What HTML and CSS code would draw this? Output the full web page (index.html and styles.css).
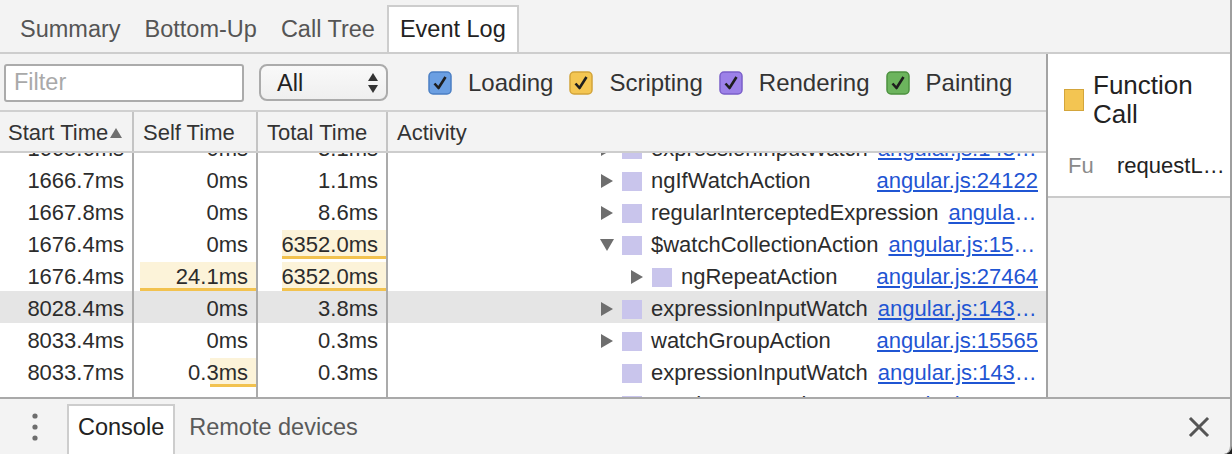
FILE: index.html
```html
<!DOCTYPE html>
<html>
<head>
<meta charset="utf-8">
<title>Event Log</title>
<link rel="stylesheet" href="styles.css">
</head>
<body>
<div class="window">
  <div class="tabbar">
    <div class="tab">Summary</div>
    <div class="tab">Bottom-Up</div>
    <div class="tab">Call Tree</div>
    <div class="tab selected">Event Log</div>
  </div>

  <div class="main">
    <div class="left">
      <div class="toolbar">
        <input class="filter" type="text" placeholder="Filter">
        <div class="select">
          <span>All</span>
          <svg class="select-arrows" width="10" height="20" viewBox="0 0 10 20"><path d="M5 0 L10 8 L0 8Z M0 12 L10 12 L5 20Z" fill="#333"/></svg>
        </div>
        <label class="cb"><svg class="box" width="24" height="24" viewBox="0 0 24 24"><rect x="1" y="1" width="22" height="22" rx="4" fill="#6b9fe2" stroke="#4b7fc4" stroke-width="1.5"/><path d="M6.5 12.5 L10.5 17 L17.5 6" fill="none" stroke="#1e1e1e" stroke-width="2.6" stroke-linejoin="round"/></svg>Loading</label>
        <label class="cb"><svg class="box" width="24" height="24" viewBox="0 0 24 24"><rect x="1" y="1" width="22" height="22" rx="4" fill="#f4c652" stroke="#d2a43a" stroke-width="1.5"/><path d="M6.5 12.5 L10.5 17 L17.5 6" fill="none" stroke="#1e1e1e" stroke-width="2.6" stroke-linejoin="round"/></svg>Scripting</label>
        <label class="cb"><svg class="box" width="24" height="24" viewBox="0 0 24 24"><rect x="1" y="1" width="22" height="22" rx="4" fill="#9c81e8" stroke="#7a5fc9" stroke-width="1.5"/><path d="M6.5 12.5 L10.5 17 L17.5 6" fill="none" stroke="#1e1e1e" stroke-width="2.6" stroke-linejoin="round"/></svg>Rendering</label>
        <label class="cb"><svg class="box" width="24" height="24" viewBox="0 0 24 24"><rect x="1" y="1" width="22" height="22" rx="4" fill="#6cb45d" stroke="#4c913f" stroke-width="1.5"/><path d="M6.5 12.5 L10.5 17 L17.5 6" fill="none" stroke="#1e1e1e" stroke-width="2.6" stroke-linejoin="round"/></svg>Painting</label>
      </div>

      <div class="cols header">
        <div class="hcell">Start Time<svg class="sort" width="12" height="10" viewBox="0 0 12 10"><path d="M6 0 L12 10 L0 10Z" fill="#707070"/></svg></div>
        <div class="hcell">Self Time</div>
        <div class="hcell">Total Time</div>
        <div class="hcell">Activity</div>
      </div>

      <div class="body">
        <div class="rows">
          <div class="cols row">
            <div class="cell">1665.6ms</div>
            <div class="cell">0ms</div>
            <div class="cell">3.1ms</div>
            <div class="cell activity">
              <span class="toggle"><svg width="14" height="14" viewBox="0 0 14 14"><path d="M1 0 L13 7 L1 14Z" fill="#6e6e6e"/></svg></span>
              <span class="swatch"></span><span class="name">expressionInputWatch</span><a class="link"><span>angular.js:14338</span></a>
            </div>
          </div>
          <div class="cols row">
            <div class="cell">1666.7ms</div>
            <div class="cell">0ms</div>
            <div class="cell">1.1ms</div>
            <div class="cell activity">
              <span class="toggle"><svg width="14" height="14" viewBox="0 0 14 14"><path d="M1 0 L13 7 L1 14Z" fill="#6e6e6e"/></svg></span>
              <span class="swatch"></span><span class="name">ngIfWatchAction</span><a class="link"><span>angular.js:24122</span></a>
            </div>
          </div>
          <div class="cols row">
            <div class="cell">1667.8ms</div>
            <div class="cell">0ms</div>
            <div class="cell">8.6ms</div>
            <div class="cell activity">
              <span class="toggle"><svg width="14" height="14" viewBox="0 0 14 14"><path d="M1 0 L13 7 L1 14Z" fill="#6e6e6e"/></svg></span>
              <span class="swatch"></span><span class="name">regularInterceptedExpression</span><a class="link"><span>angular.js:15565</span></a>
            </div>
          </div>
          <div class="cols row">
            <div class="cell">1676.4ms</div>
            <div class="cell">0ms</div>
            <div class="cell bar" style="--w:104px">6352.0ms</div>
            <div class="cell activity">
              <span class="toggle"><svg width="14" height="14" viewBox="0 0 14 14"><path d="M0 1 L14 1 L7 13Z" fill="#6e6e6e"/></svg></span>
              <span class="swatch"></span><span class="name">$watchCollectionAction</span><a class="link"><span>angular.js:15523</span></a>
            </div>
          </div>
          <div class="cols row">
            <div class="cell">1676.4ms</div>
            <div class="cell bar" style="--w:116px">24.1ms</div>
            <div class="cell bar" style="--w:104px">6352.0ms</div>
            <div class="cell activity depth1">
              <span class="toggle"><svg width="14" height="14" viewBox="0 0 14 14"><path d="M1 0 L13 7 L1 14Z" fill="#6e6e6e"/></svg></span>
              <span class="swatch"></span><span class="name">ngRepeatAction</span><a class="link"><span>angular.js:27464</span></a>
            </div>
          </div>
          <div class="cols row selected">
            <div class="cell">8028.4ms</div>
            <div class="cell">0ms</div>
            <div class="cell">3.8ms</div>
            <div class="cell activity">
              <span class="toggle"><svg width="14" height="14" viewBox="0 0 14 14"><path d="M1 0 L13 7 L1 14Z" fill="#6e6e6e"/></svg></span>
              <span class="swatch"></span><span class="name">expressionInputWatch</span><a class="link"><span>angular.js:14338</span></a>
            </div>
          </div>
          <div class="cols row">
            <div class="cell">8033.4ms</div>
            <div class="cell">0ms</div>
            <div class="cell">0.3ms</div>
            <div class="cell activity">
              <span class="toggle"><svg width="14" height="14" viewBox="0 0 14 14"><path d="M1 0 L13 7 L1 14Z" fill="#6e6e6e"/></svg></span>
              <span class="swatch"></span><span class="name">watchGroupAction</span><a class="link"><span>angular.js:15565</span></a>
            </div>
          </div>
          <div class="cols row">
            <div class="cell">8033.7ms</div>
            <div class="cell bar" style="--w:46px">0.3ms</div>
            <div class="cell">0.3ms</div>
            <div class="cell activity">
              <span class="toggle"></span>
              <span class="swatch"></span><span class="name">expressionInputWatch</span><a class="link"><span>angular.js:14338</span></a>
            </div>
          </div>
          <div class="cols row">
            <div class="cell">8034.1ms</div>
            <div class="cell">0ms</div>
            <div class="cell">0.2ms</div>
            <div class="cell activity">
              <span class="toggle"><svg width="14" height="14" viewBox="0 0 14 14"><path d="M1 0 L13 7 L1 14Z" fill="#6e6e6e"/></svg></span>
              <span class="swatch"></span><span class="name">watchGroupAction</span><a class="link"><span>angular.js:15565</span></a>
            </div>
          </div>
        </div>
      </div>
    </div>

    <div class="details">
      <div class="details-top">
        <div class="details-title">
          <span class="title-swatch"></span>
          <span class="title-text">Function<br>Call</span>
        </div>
        <div class="details-row">
          <span class="details-label">Fu</span>
          <span class="details-value">requestLayoutUpdate</span>
        </div>
      </div>
    </div>
  </div>

  <div class="drawer">
    <div class="more"><svg width="6" height="28" viewBox="0 0 6 28"><circle cx="3" cy="3" r="2.6" fill="#6d6d6d"/><circle cx="3" cy="14" r="2.6" fill="#6d6d6d"/><circle cx="3" cy="25" r="2.6" fill="#6d6d6d"/></svg></div>
    <div class="dtab selected">Console</div>
    <div class="dtab">Remote devices</div>
    <div class="close"><svg width="22" height="22" viewBox="0 0 22 22"><path d="M3 3 L19 19 M19 3 L3 19" stroke="#555" stroke-width="3" stroke-linecap="square"/></svg></div>
  </div>
</div>
</body>
</html>
```

FILE: styles.css
```css
* {
  box-sizing: border-box;
}

html {
  background: #1e1e1e;
}

body {
  margin: 0;
  font-family: "Liberation Sans", Arial, sans-serif;
  color: #303030;
}

.window {
  width: 1232px;
  height: 454px;
  background: #f3f3f3;
  border-right: 2px solid #9e9e9e;
  border-bottom-right-radius: 8px;
  overflow: hidden;
  display: flex;
  flex-direction: column;
}

/* top tabs */
.tabbar {
  height: 54px;
  flex: none;
  display: flex;
  align-items: flex-end;
  padding-left: 8px;
  border-bottom: 2px solid #cdcdcd;
  font-size: 23.5px;
}

.tab {
  height: 47px;
  padding: 0 10px 1px;
  display: flex;
  align-items: center;
  color: #555;
  border: 2px solid transparent;
  border-bottom: 0;
  white-space: nowrap;
}

.tab.selected {
  background: #fff;
  border-color: #cdcdcd;
  color: #222;
  padding: 0 11px 1px;
}

/* main split */
.main {
  flex: 1;
  display: flex;
  min-height: 0;
}

.left {
  width: 1046px;
  flex: none;
  display: flex;
  flex-direction: column;
}

/* toolbar */
.toolbar {
  height: 58px;
  flex: none;
  display: flex;
  align-items: center;
  padding: 1px 0 0 4px;
  border-bottom: 2px solid #d0d0d0;
  font-size: 24px;
}

.filter {
  width: 240px;
  height: 38px;
  border: 2px solid #ababab;
  border-radius: 3px;
  background: #fff;
  font: inherit;
  font-size: 23.5px;
  padding: 0 8px;
  color: #333;
  outline: none;
}

.filter::placeholder {
  color: #a9a9a9;
}

.select {
  margin-left: 15px;
  width: 129px;
  height: 37px;
  border: 2px solid #ababab;
  border-radius: 8px;
  background: linear-gradient(#f9f9f9, #efefef);
  display: flex;
  align-items: center;
  justify-content: space-between;
  padding: 2px 8px 0 16px;
  color: #222;
  font-size: 23.5px;
}

.select-arrows {
  display: block;
  margin-top: -2px;
}

.cb {
  display: flex;
  align-items: center;
  gap: 16px;
  color: #333;
  margin-left: 16px;
  white-space: nowrap;
}

.cb:first-of-type {
  margin-left: 40px;
}

.box {
  display: block;
  flex: none;
}

/* table */
.cols {
  display: grid;
  grid-template-columns: 132px 124px 130px 1fr;
}

.header {
  height: 41px;
  flex: none;
  border-bottom: 2px solid #cdcdcd;
  font-size: 22px;
  color: #333;
}

.hcell {
  display: flex;
  align-items: center;
  padding: 2px 0 0 9px;
  white-space: nowrap;
}

.hcell:first-child {
  padding-left: 8px;
}

.hcell + .hcell {
  border-left: 2px solid #c4c4c4;
}

.sort {
  margin-left: 2px;
  display: block;
}

.body {
  flex: 1;
  background: #fff;
  overflow: hidden;
}

.rows {
  margin-top: -22px;
}

.row {
  height: 32px;
  font-size: 22px;
  line-height: 28px;
  color: #2c2c2c;
}

.row.selected {
  background: #e5e5e5;
}

.cell {
  padding: 4px 8px 0;
  text-align: right;
  white-space: nowrap;
  overflow: hidden;
}

.cell + .cell {
  border-left: 2px solid #ababab;
}

.bar {
  background:
    linear-gradient(#f2c24f, #f2c24f) right 0 bottom 0 / var(--w) 3px no-repeat,
    linear-gradient(#fcf3d9, #fcf3d9) right 0 top 3px / var(--w) 26px no-repeat;
}

.activity {
  display: flex;
  align-items: center;
  text-align: left;
  padding-left: 212px;
}

.activity.depth1 {
  padding-left: 242px;
}

.toggle {
  width: 22px;
  flex: none;
  display: flex;
  align-items: center;
}

.toggle svg {
  display: block;
}

.swatch {
  width: 20px;
  height: 19px;
  flex: none;
  background: #c9c5ec;
  margin-right: 9px;
}

.name {
  flex: none;
  padding-right: 10px;
}

.link {
  margin-left: auto;
  min-width: 0;
  overflow: hidden;
  text-overflow: ellipsis;
  white-space: nowrap;
  color: #1f55d3;
}

.link span {
  text-decoration: underline;
}

/* details pane */
.details {
  flex: 1;
  border-left: 2px solid #a3a3a3;
  display: flex;
  flex-direction: column;
  min-width: 0;
}

.details-top {
  height: 144px;
  flex: none;
  background: #fff;
  border-bottom: 2px solid #cacaca;
  padding-top: 17px;
}

.details-title {
  display: flex;
  align-items: center;
  gap: 9px;
  padding-left: 16px;
}

.title-swatch {
  width: 20px;
  height: 22px;
  flex: none;
  background: #f3c552;
  border: 1.5px solid #d3a53b;
}

.title-text {
  font-size: 26px;
  line-height: 29px;
  color: #222;
}

.details-row {
  display: flex;
  font-size: 22px;
  line-height: 32px;
  margin-top: 21px;
  padding-left: 20px;
}

.details-label {
  width: 49px;
  flex: none;
  color: #8a8a8a;
  overflow: hidden;
  white-space: nowrap;
}

.details-value {
  min-width: 0;
  overflow: hidden;
  text-overflow: ellipsis;
  white-space: nowrap;
  color: #222;
}

/* drawer */
.drawer {
  height: 57px;
  flex: none;
  border-top: 2px solid #a9a9a9;
  display: flex;
  align-items: flex-end;
  font-size: 23.5px;
}

.more {
  width: 67px;
  align-self: center;
  display: flex;
  justify-content: center;
  padding-left: 2px;
}

.more svg {
  display: block;
}

.dtab {
  height: 50px;
  padding: 0 12px 5px;
  display: flex;
  align-items: center;
  color: #5a5a5a;
  border: 2px solid transparent;
  border-bottom: 0;
  white-space: nowrap;
}

.dtab.selected {
  background: #fff;
  border-color: #cdcdcd;
  color: #222;
  padding: 0 9px 5px;
}

.close {
  margin-left: auto;
  margin-right: 20px;
  align-self: center;
}

.close svg {
  display: block;
}
```
